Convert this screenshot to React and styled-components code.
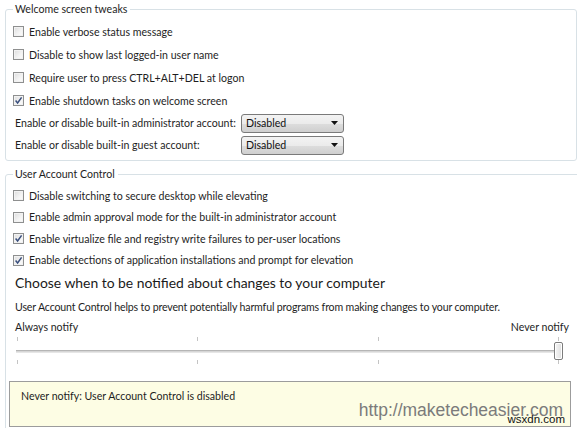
import React from "react";
import styled, { createGlobalStyle } from "styled-components";

const Global = createGlobalStyle`
  body {
    margin: 0;
    background: #fff;
  }
  * {
    box-sizing: border-box;
  }
`;

const Page = styled.div`
  width: 577px;
  height: 428px;
  overflow: hidden;
  background: #fff;
  font-family: "Lato", "Open Sans", sans-serif;
  font-size: 10.6px;
  color: #1e1e1e;
`;

const Group = styled.fieldset`
  margin: ${(p) => p.$top}px 0 0 5px;
  width: ${(p) => p.$width}px;
  height: ${(p) => p.$height}px;
  padding: ${(p) => p.$padTop}px 0 0 6px;
  border: 1px solid #d8e1e6;
  border-radius: 3px;
  min-width: 0;
`;

const Legend = styled.legend`
  padding: 0 3px 0 2px;
  margin-left: 1px;
  line-height: 16px;
  font-size: 10.6px;
  color: #1e1e1e;
`;

const CheckRow = styled.label`
  display: flex;
  align-items: center;
  height: ${(p) => p.$h}px;
  padding-left: 1px;
  white-space: nowrap;
`;

const Box = styled.span`
  width: 11px;
  height: 11px;
  border: 1px solid #8e8f8f;
  background: linear-gradient(135deg, #dcdcdc 0%, #f4f4f4 60%, #fcfcfc 100%);
  box-shadow: inset 0 0 0 1px #f2f2f2;
  margin-right: 5px;
  display: flex;
  align-items: center;
  justify-content: center;
  flex: none;
`;

const SelectRow = styled.div`
  display: flex;
  align-items: center;
  height: ${(p) => p.$h}px;
  padding-left: 3px;
  white-space: nowrap;
`;

const SelectLabel = styled.span`
  width: 226px;
`;

const Select = styled.div`
  width: 103px;
  height: 19px;
  border: 1px solid #7a7a7a;
  border-radius: 3px;
  background: linear-gradient(#f3f3f3 0%, #ebebeb 50%, #dddddd 51%, #cfcfcf 100%);
  display: flex;
  align-items: center;
  justify-content: space-between;
  padding: 0 5px 0 4px;
  color: #111;
`;

const Heading = styled.div`
  font-size: 13.9px;
  line-height: 20px;
  height: 27px;
  padding: 2px 0 0 3px;
  color: #1a1a1a;
  white-space: nowrap;
`;

const Desc = styled.div`
  height: 21px;
  line-height: 16px;
  padding: 1px 0 0 3px;
  letter-spacing: -0.15px;
  white-space: nowrap;
`;

const Ends = styled.div`
  display: flex;
  justify-content: space-between;
  width: 557px;
  height: 16px;
  line-height: 16px;
  padding-left: 3px;
`;

const Slider = styled.div`
  position: relative;
  width: 547px;
  height: 34px;
  margin: 1px 0 0 4px;
`;

const Ticks = styled.div`
  display: flex;
  justify-content: space-between;
  padding: 0 4px 0 1px;
  height: 6px;
  margin-top: ${(p) => p.$mt}px;
`;

const Tick = styled.span`
  width: 1px;
  height: 4px;
  background: #c4c4c4;
`;

const Track = styled.div`
  height: 3px;
  margin-top: 7px;
  border-top: 1px solid #b5b5b5;
  border-bottom: 1px solid #e6e6e6;
  background: #d6d6d6;
`;

const Thumb = styled.div`
  position: absolute;
  right: 0;
  top: 5px;
  width: 9px;
  height: 18px;
  border: 1px solid #7c7c7c;
  border-radius: 2px;
  background: linear-gradient(90deg, #f6f6f6, #dedede);
  box-shadow: inset 0 0 0 1px #fff;
`;

const Info = styled.div`
  position: relative;
  width: 562px;
  height: 46px;
  margin: 10px 0 0 -3px;
  background: #fdfde4;
  border: 1px solid #9c9c9c;
  padding: 6px 0 0 11px;
  line-height: 16px;
`;

const Watermark = styled.div`
  position: absolute;
  right: 7px;
  bottom: 6px;
  font-family: "Liberation Sans", Arial, sans-serif;
  font-size: 17.5px;
  line-height: 20px;
  color: #7b7b7b;
`;

const Stamp = styled.div`
  position: absolute;
  right: 5px;
  bottom: 1px;
  font-family: "Liberation Sans", Arial, sans-serif;
  font-size: 11.5px;
  line-height: 12px;
  color: #111;
`;

function Check({ checked }) {
  return (
    <Box>
      {checked && (
        <svg width="9" height="9" viewBox="0 0 9 9">
          <path d="M1.6 4.6 L3.6 7 L7.6 1.4" fill="none" stroke="#3a4f7d" strokeWidth="1.5" />
        </svg>
      )}
    </Box>
  );
}

function Arrow() {
  return (
    <svg width="7" height="4" viewBox="0 0 7 4">
      <path d="M0 0 H7 L3.5 4 Z" fill="#111" />
    </svg>
  );
}

const welcome = [
  ["Enable verbose status message", false],
  ["Disable to show last logged-in user name", false],
  ["Require user to press CTRL+ALT+DEL at logon", false],
  ["Enable shutdown tasks on welcome screen", true],
];

const uac = [
  ["Disable switching to secure desktop while elevating", false],
  ["Enable admin approval mode for the built-in administrator account", false],
  ["Enable virtualize file and registry write failures to per-user locations", true],
  ["Enable detections of application installations and prompt for elevation", true],
];

export default function App() {
  return (
    <Page>
      <Global />
      <Group $top={1} $width={572} $height={160} $padTop={3}>
        <Legend>Welcome screen tweaks</Legend>
        {welcome.map(([t, c]) => (
          <CheckRow key={t} $h={23}>
            <Check checked={c} />
            {t}
          </CheckRow>
        ))}
        <SelectRow $h={22}>
          <SelectLabel>Enable or disable built-in administrator account:</SelectLabel>
          <Select>
            Disabled
            <Arrow />
          </Select>
        </SelectRow>
        <SelectRow $h={22}>
          <SelectLabel>Enable or disable built-in guest account:</SelectLabel>
          <Select>
            Disabled
            <Arrow />
          </Select>
        </SelectRow>
      </Group>
      <Group $top={5} $width={620} $height={300} $padTop={3}>
        <Legend>User Account Control</Legend>
        {uac.map(([t, c]) => (
          <CheckRow key={t} $h={21.5}>
            <Check checked={c} />
            {t}
          </CheckRow>
        ))}
        <Heading>Choose when to be notified about changes to your computer</Heading>
        <Desc>User Account Control helps to prevent potentially harmful programs from making changes to your computer.</Desc>
        <Ends>
          <span>Always notify</span>
          <span>Never notify</span>
        </Ends>
        <Slider>
          <Ticks $mt={2}>
            <Tick />
            <Tick />
            <Tick />
            <Tick />
          </Ticks>
          <Track />
          <Ticks $mt={7}>
            <Tick />
            <Tick />
            <Tick />
            <Tick />
          </Ticks>
          <Thumb />
        </Slider>
        <Info>
          Never notify: User Account Control is disabled
          <Watermark>http://maketecheasier.com</Watermark>
          <Stamp>wsxdn.com</Stamp>
        </Info>
      </Group>
    </Page>
  );
}
